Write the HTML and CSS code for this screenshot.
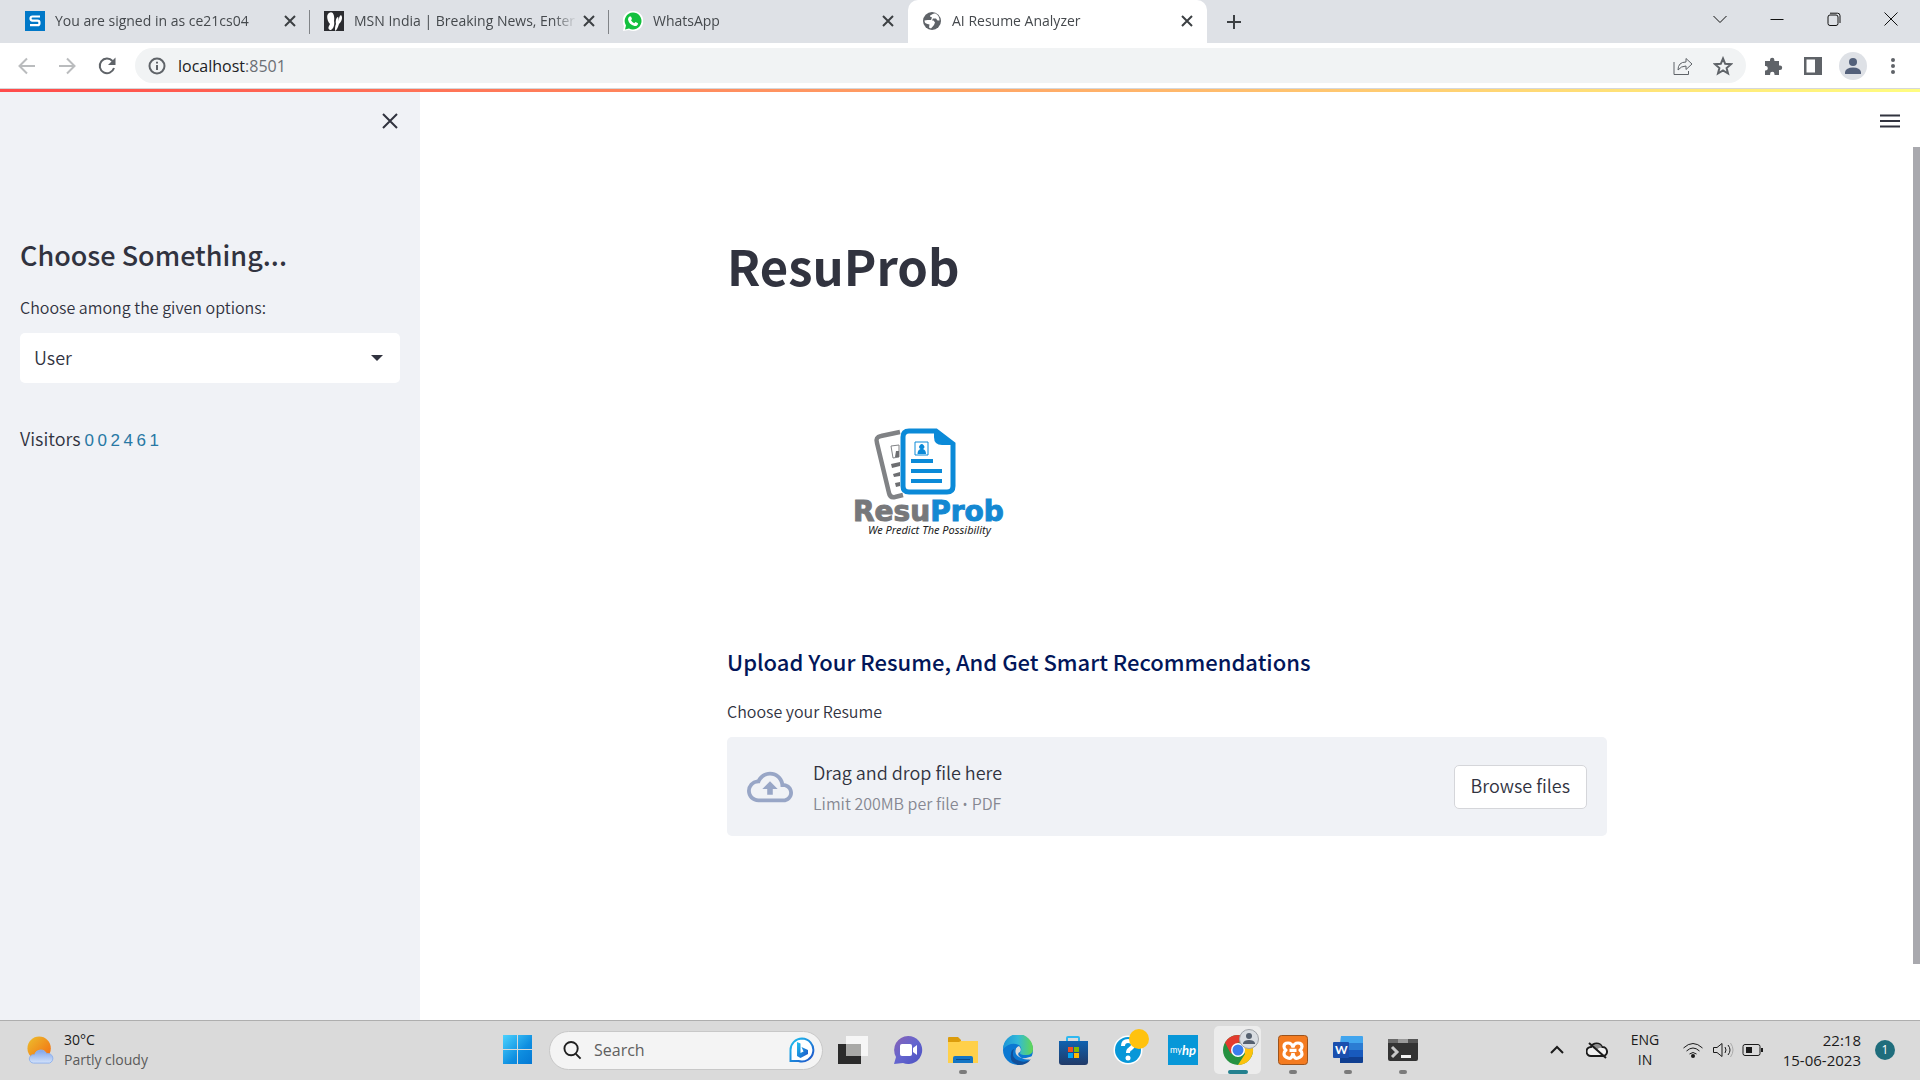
FILE: index.html
```html
<!DOCTYPE html>
<html lang="en">
<head>
<meta charset="utf-8">
<meta name="viewport" content="width=device-width, initial-scale=1">
<title>AI Resume Analyzer</title>
<link rel="stylesheet" href="styles.css">
</head>
<body>
<header class="browser">
  <div class="tabstrip">
    <nav class="tabs" aria-label="Tabs">
      <div class="tab">
        <svg class="favicon" viewBox="0 0 20 20"><path fill="#0078c8" d="M0 0h20v20H0z"/><path d="M15 5.5H7.5Q5.5 5.500 5.500 7.500T7.500 9.700h5q2 0 2 2.200t-2 2.300H5" fill="none" stroke="#fff" stroke-width="2.200"/></svg>
        <a class="tab-title" href="#">You are signed in as ce21cs04</a>
        <button class="tab-close" aria-label="Close tab"><svg viewBox="0 0 12 12"><path d="M1 1l10 10M11 1L1 11"/></svg></button>
      </div>
      <div class="tab">
        <svg class="favicon" viewBox="0 0 20 20"><path fill="#2b2c30" d="M0 0h20v20H0z"/><path fill="#fff" d="M5 2c4-3 6 3 5 8 1 4-1 9-4 9-3-1-1-4 0-6-3-3-4-9-1-11zM17 4c2 2 1 6-2 9-1 3-2 6-4 7 0-3 0-5 1-7-1-4 1-7 2-7 1 1 0 3 0 4 1-2 1-5 3-6z"/></svg>
        <a class="tab-title" href="#">MSN India | Breaking News, Enter</a>
        <button class="tab-close" aria-label="Close tab"><svg viewBox="0 0 12 12"><path d="M1 1l10 10M11 1L1 11"/></svg></button>
      </div>
      <div class="tab">
        <svg class="favicon" viewBox="0 0 20 20"><path fill="#fff" d="M10 0a10 10 0 1 1-4 19L0 20l1-5A10 10 0 0 1 10 0z"/><path fill="#12c03e" d="M10 1.500a8.500 8.500 0 1 1-4 16L2 18.500l1-4a8.500 8.500 0 0 1 7-13z"/><path fill="#fff" d="M6.500 5.500l1.500 0 1 2.500-1 1.300q1.200 2.200 3.200 3l1.300-1.300 2.500 1.200q0 3-3.500 2.800Q6 13.500 5 8.500q0-2 1.500-3z"/></svg>
        <a class="tab-title" href="#">WhatsApp</a>
        <button class="tab-close" aria-label="Close tab"><svg viewBox="0 0 12 12"><path d="M1 1l10 10M11 1L1 11"/></svg></button>
      </div>
      <div class="tab tab-active">
        <svg class="favicon" viewBox="0 0 20 20"><circle cx="10" cy="10" r="9" fill="#5f6368"/><path fill="#fff" d="M12 2.500c-1 1-4 1-4 3l2 1-1 2.500H5.500l-3 .5q0 3 3 3.500l2 .5-.5 3 2 1 3-3.500 1-2.500-1.500-2H10l1-2h3l1.500 2h2q0-5-4-7z"/></svg>
        <a class="tab-title" href="#">AI Resume Analyzer</a>
        <button class="tab-close" aria-label="Close tab"><svg viewBox="0 0 12 12"><path d="M1 1l10 10M11 1L1 11"/></svg></button>
      </div>
      <button class="tab-new" aria-label="New tab"><svg viewBox="0 0 16 16"><path d="M8 1v14M1 8h14"/></svg></button>
    </nav>
    <div class="window-controls">
      <button aria-label="Search tabs"><svg viewBox="0 0 14 14"><path d="M.5 4L7 10.500 13.500 4"/></svg></button>
      <button aria-label="Minimize"><svg viewBox="0 0 14 14"><path d="M.5 7.500h13"/></svg></button>
      <button aria-label="Restore"><svg viewBox="0 0 14 14"><rect x="1" y="3" width="10" height="10.500" rx="2"/><path d="M3 1.200h7.500q2.500 0 2.500 2.500V11"/></svg></button>
      <button aria-label="Close window"><svg viewBox="0 0 14 14"><path d="M.5.5l13 13M13.500.5l-13 13"/></svg></button>
    </div>
  </div>
  <div class="toolbar">
    <button class="tool tool-off" aria-label="Back"><svg viewBox="0 0 20 20"><path d="M18 10H3M10 2.500L2.500 10l7.500 7.500"/></svg></button>
    <button class="tool tool-off" aria-label="Forward"><svg viewBox="0 0 20 20"><path d="M2 10h15M10 2.500l7.500 7.500-7.500 7.500"/></svg></button>
    <button class="tool" aria-label="Reload"><svg viewBox="0 0 20 20"><path d="M15.500 5A7.300 7.300 0 1 0 17 12"/><path class="solid" d="M18.500 1.500V9H11z"/></svg></button>
    <div class="omnibox">
      <svg class="site-info" viewBox="0 0 18 18"><circle cx="9" cy="9" r="7.500"/><path d="M9 8v5M9 4.800v1.800"/></svg>
      <a class="address" href="#">localhost<span class="port">:8501</span></a>
      <button class="tool" aria-label="Share"><svg viewBox="0 0 20 20"><path class="thin" d="M1 6v12.500h14.500V15M5 14q0-8 8-8V2.500L19 8l-6 5.500V10q-5 0-8 4z"/></svg></button>
      <button class="tool" aria-label="Bookmark"><svg viewBox="0 0 20 20"><path class="mid" d="M10 2.500l2.200 5.300 5.800.4-4.400 3.800 1.400 5.500-5-3-5 3 1.400-5.500L2 8.200l5.800-.4z"/></svg></button>
    </div>
    <button class="tool tool-ext" aria-label="Extensions"><svg viewBox="0 0 20 20"><path class="solid" d="M2 5h5V4a2.200 2.200 0 0 1 4.400 0v1H16v4.500h1a2.200 2.200 0 0 1 0 4.400h-1V19h-4.500v-1a2.200 2.200 0 0 0-4.400 0v1H2v-4.500h1a2.300 2.300 0 0 0 0-4.500H2z"/></svg></button>
    <button class="tool" aria-label="Side panel"><svg viewBox="0 0 20 20"><path class="solid" fill-rule="evenodd" d="M1 1h18v18H1zM3.500 3.500v13H12v-13z"/></svg></button>
    <button class="tool profile" aria-label="Profile"><svg viewBox="0 0 20 20"><circle cx="10" cy="6" r="4"/><path d="M2 18v-2q1-4.500 8-4.500t8 4.500v2z"/></svg></button>
    <button class="tool" aria-label="Menu"><svg viewBox="0 0 20 20"><g class="solid"><circle cx="10" cy="4" r="2"/><circle cx="10" cy="10" r="2"/><circle cx="10" cy="16" r="2"/></g></svg></button>
  </div>
</header>
<div class="stripe"></div>
<div class="app">
  <aside class="sidebar">
    <button class="sidebar-close" aria-label="Close sidebar"><svg viewBox="0 0 16 16"><path d="M1 1l14 14M15 1L1 15"/></svg></button>
    <h2 class="sidebar-title">Choose Something...</h2>
    <label class="field-label" for="role">Choose among the given options:</label>
    <div class="select">
      <select id="role"><option>User</option><option>Admin</option></select>
      <svg viewBox="0 0 12 6"><path d="M0 0h12L6 6z"/></svg>
    </div>
    <p class="visitors">Visitors <span class="counter"><span>0</span><span>0</span><span>2</span><span>4</span><span>6</span><span>1</span></span></p>
  </aside>
  <main class="main">
    <button class="app-menu" aria-label="App menu"><svg viewBox="0 0 20 14"><path d="M0 1.500h20M0 7h20M0 12.500h20"/></svg></button>
    <div class="block">
      <h1 class="title">ResuProb</h1>
      <svg class="logo" viewBox="0 0 312 307" role="img" aria-label="ResuProb, We Predict The Possibility">
        <g fill="none" stroke="#808285" stroke-width="4.500"><path d="M173 93l-19 4q-6 1-4 7l12 50q1 5 6 4l8-2"/></g>
        <g fill="#6d6e71"><path d="M164 107l8-1v12l-6 1z" fill="none" stroke="#808285"/><path d="M169 112h3v6h-4zM164 125l9-2v4l-8 2zM166 135l7-2v4l-6 1zM168 144l5-1v4l-4 1z"/></g>
        <path d="M182 92h27l17 13v42q0 6-6 6h-38q-6 0-6-6V98q0-6 6-6z" fill="#fff" stroke="#0b8ad8" stroke-width="5"/>
        <path d="M207 92l19 14h-11q-8 0-8-8z" fill="#0b8ad8"/>
        <path d="M188 103h13v13h-13z" fill="none" stroke="#0b8ad8"/>
        <path d="M190.500 115q0-4 3-5a2.500 2.500 0 1 1 2.500 0q3 1 3 5zM184 120h22v4h-22zM184 130h31v4h-31zM184 140h31v4h-31z" fill="#0b8ad8"/>
        <g class="logo-name"><text x="126" y="182" fill="#77787b" stroke="#77787b">Resu<tspan fill="#1488d2" stroke="#1488d2">Prob</tspan></text></g>
        <text class="logo-tag" x="141" y="195">We Predict The Possibility</text>
      </svg>
      <h5 class="subtitle">Upload Your Resume, And Get Smart Recommendations</h5>
      <p class="field-label" id="upload-label">Choose your Resume</p>
      <section class="dropzone" aria-labelledby="upload-label">
        <svg class="cloud" viewBox="0 0 24 24"><path d="M19.350 10.040A7.490 7.490 0 0 0 12 4C9.110 4 6.600 5.640 5.350 8.040A5.994 5.994 0 0 0 0 14c0 3.310 2.690 6 6 6h13c2.760 0 5-2.240 5-5 0-2.640-2.050-4.780-4.650-4.960zM19 18H6c-2.210 0-4-1.790-4-4s1.790-4 4-4h.710C7.370 7.690 9.480 6 12 6c3.040 0 5.500 2.460 5.500 5.500v.5H19c1.660 0 3 1.340 3 3s-1.340 3-3 3zM8 13h2.550v3h2.900v-3H16l-4-4z"/></svg>
        <div class="drop-text">
          <p class="drop-main">Drag and drop file here</p>
          <p class="drop-note">Limit 200MB per file <span class="dot">•</span> PDF</p>
        </div>
        <button class="browse">Browse files</button>
      </section>
    </div>
    <div class="scrollbar"></div>
  </main>
</div>
<footer class="taskbar">
  <div class="weather">
    <svg class="weather-icon" viewBox="0 0 30 30"><defs><linearGradient id="sun" x1="0" y1="0" x2="1" y2="1"><stop offset="0" stop-color="#ecc02e"/><stop offset="1" stop-color="#f4680f"/></linearGradient><linearGradient id="cl" x1="0" y1="0" x2="0" y2="1"><stop offset="0" stop-color="#7fa4ea"/><stop offset="1" stop-color="#d3e2fa"/></linearGradient></defs><circle cx="13" cy="13" r="12.500" fill="url(#sun)"/><path d="M7 29a4.500 4.500 0 0 1 0-9h1a7 7 0 0 1 13-1 5 5 0 0 1 3 10z" fill="url(#cl)" stroke="#8db0ee"/></svg>
    <p class="weather-text">30°C<br><span>Partly cloudy</span></p>
  </div>
  <div class="pins">
    <button class="pin" aria-label="Start"><svg viewBox="0 0 30 30"><defs><linearGradient id="win" x1="0" y1="0" x2="1" y2="1"><stop offset="0" stop-color="#4cd2fe"/><stop offset=".6" stop-color="#0e8ee0"/><stop offset="1" stop-color="#0478d4"/></linearGradient></defs><path fill="url(#win)" d="M0 0h14v14H0zM15 0h14v14H15zM0 15h14v14H0zM15 15h14v14H15z"/></svg></button>
    <div class="search">
      <svg class="search-glass" viewBox="0 0 20 20"><circle cx="8.500" cy="8" r="7"/><path d="M13.500 13.500l5 5"/></svg>
      <input type="text" placeholder="Search" aria-label="Search">
      <svg class="bing" viewBox="0 0 26 26"><defs><linearGradient id="bing" x1="0" y1="0" x2="1" y2="1"><stop offset="0" stop-color="#1fc4f0"/><stop offset="1" stop-color="#1d4fc8"/></linearGradient></defs><path d="M13 1.500a11.500 11.500 0 1 1-3.500 22.500H1.500V13A11.500 11.500 0 0 1 13 1.500z" fill="#fff" stroke="url(#bing)" stroke-width="2"/><path d="M8 5l3.500 1.500v9.500l3-1.500-2-4.500 6.500 3v4l-7.500 4L8 19z" fill="url(#bing)"/></svg>
    </div>
    <button class="pin" aria-label="Task view"><svg viewBox="0 0 30 30"><path fill="#2b2b2b" d="M0 9h23v20H0z"/><path fill="#f6f6f6" d="M23 1h7v20H8V9 1z"/><path fill="#a9a9a7" d="M8 9h15v12H8z"/></svg></button>
    <button class="pin" aria-label="Chat"><svg viewBox="0 0 30 30"><defs><linearGradient id="chat" x1="0" y1="0" x2="1" y2="1"><stop offset="0" stop-color="#8a62b4"/><stop offset=".5" stop-color="#6465cf"/><stop offset="1" stop-color="#4b50c0"/></linearGradient></defs><path fill="url(#chat)" d="M15 1a14 14 0 1 1-5 27l-9 1 2-7A14 14 0 0 1 15 1z"/><rect x="7" y="9" width="12" height="12" rx="2" fill="#fff"/><path fill="#fff" d="M20 13l4-3v10l-4-3z"/></svg></button>
    <button class="pin running" aria-label="File Explorer"><svg viewBox="0 0 30 30"><path fill="#dc9c0c" d="M0 3q0-1 1-1h9l3 3v3H0z"/><path fill="#ffd04a" d="M0 7h11l2-1h17v22H0z"/><path fill="#1475c4" d="M5 28v-5q0-2 2-2h16q2 0 2 2v5z"/><path stroke="#0a4c8c" d="M8 24.500h14"/></svg></button>
    <button class="pin" aria-label="Edge"><svg viewBox="0 0 30 30"><defs><linearGradient id="edge" x1="0" y1="0" x2="1" y2="0"><stop offset="0" stop-color="#1c94d8"/><stop offset=".5" stop-color="#32b9d8"/><stop offset="1" stop-color="#62d850"/></linearGradient></defs><circle cx="15" cy="15" r="15" fill="#0b78d2"/><path fill="url(#edge)" d="M0 14A15 15 0 0 1 30 14q0 6-7 6-6 0-6-2 3-5-1-8-8-4-16 4z"/><path fill="#124f98" d="M11 14q-4 9 6 12 6 2 11-2Q24 30 16 30 6 28 8 19q0-4 3-5z"/><path fill="#dadada" d="M16 11q-5 2-3 8 3 5 10 4l7-2v2l-2 1q-7 2-12-3-2-3 1-4 2-3-1-6z"/></svg></button>
    <button class="pin" aria-label="Microsoft Store"><svg viewBox="0 0 30 30"><defs><linearGradient id="store" x1="0" y1="0" x2="0" y2="1"><stop offset="0" stop-color="#0f62b0"/><stop offset="1" stop-color="#213a68"/></linearGradient></defs><path d="M9 7V3q0-1 1-1h10q1 0 1 1v4" fill="none" stroke="#2fb8f0" stroke-width="2"/><path fill="url(#store)" d="M1 6h29v21q0 3-3 3H4q-3 0-3-3z"/><path fill="#f25022" d="M10 12h5v5h-5z"/><path fill="#7fba00" d="M16 12h5v5h-5z"/><path fill="#00a4ef" d="M10 18h5v5h-5z"/><path fill="#ffb900" d="M16 18h5v5h-5z"/></svg></button>
    <button class="pin" aria-label="HP Support"><svg class="help" viewBox="0 0 36 36"><circle cx="15" cy="21" r="14.500" fill="#fff"/><circle cx="15" cy="21" r="13" fill="#0797d8"/><path d="M10 17q0-5 5-5t5 4q0 2-3 4-2 1-2 4" fill="none" stroke="#fff" stroke-width="4"/><circle cx="15" cy="29" r="2.500" fill="#fff"/><circle cx="26" cy="10" r="10" fill="#ffc20e"/></svg></button>
    <button class="pin" aria-label="myHP"><svg viewBox="0 0 30 30"><path fill="#0797d8" d="M0 0h30v30H0z"/><text class="my" x="2" y="18">my</text><text class="hp" x="14" y="20">hp</text></svg></button>
    <button class="pin running current" aria-label="Chrome"><svg viewBox="0 0 36 36"><circle cx="15" cy="21" r="15" fill="#259140"/><path fill="#e33b2e" d="M2 13.500A15 15 0 0 1 28 13.500H15L8 25z"/><path fill="#fcc20c" d="M28 13.500A15 15 0 0 1 15 36l7-11-4-11.500z"/><circle cx="15" cy="21" r="7" fill="#fff"/><circle cx="15" cy="21" r="5.500" fill="#3b7ded"/><circle cx="26" cy="10" r="9.500" fill="#d9dde2" stroke="#9fa3a8"/><circle cx="26" cy="7" r="3" fill="#55606f"/><path fill="#55606f" d="M20 15v-1q1-3 6-3t6 3v1z"/></svg></button>
    <button class="pin running" aria-label="XAMPP"><svg viewBox="0 0 30 30"><rect x=".5" y=".5" width="29" height="29" rx="3" fill="#f47b20" stroke="#9c531c"/><path d="M15 12.500Q14 8 10 8T6 11.500Q6 14 8 15.200 6 16.500 6 19T10 23t5-5M15 12.500Q16 8 20 8t4 3.500q0 2.500-2 3.700 2 1.300 2 3.800t-4 4-5-5M11.500 15.300h7" fill="none" stroke="#fff" stroke-width="3.200" stroke-linejoin="round"/></svg></button>
    <button class="pin running" aria-label="Word"><svg viewBox="0 0 30 30"><path fill="#41a5ee" d="M8 1h21q1 0 1 1v6H7z"/><path fill="#2b7cd3" d="M7 8h23v7H7z"/><path fill="#185abd" d="M7 15h23v7H7z"/><path fill="#103f91" d="M7 22h23v5q0 1-1 1H7z"/><rect y="7" width="16" height="16" rx="1" fill="#1a4fae"/><text class="word" x="2" y="19">W</text></svg></button>
    <button class="pin running" aria-label="Terminal"><svg viewBox="0 0 30 30"><path fill="#333" d="M0 4h30v20q0 2-2 2H2q-2 0-2-2z"/><path fill="#6a6a6a" d="M0 4h10v4H0z"/><path fill="#9a9a9a" d="M10 4h10v4H10z"/><path fill="#555" d="M20 4h10v4H20z"/><path d="M4 12l5 5-5 5" fill="none" stroke="#c8c8c8" stroke-width="3"/><path fill="#f2f2f2" d="M13 20h10v3H13z"/></svg></button>
  </div>
  <div class="tray">
    <button class="tray-up" aria-label="Show hidden icons"><svg viewBox="0 0 14 14"><path d="M1 10l6-6 6 6"/></svg></button>
    <svg class="tray-cloud" viewBox="0 0 22 18"><path fill="#f0f0f0" d="M5 15a4 4 0 0 1 0-9 6 6 0 0 1 11 0 4.500 4.500 0 0 1 1 9z"/><path fill="#8d8d8d" stroke="none" d="M6 6q2-3 5-3 4 0 5 4-4-1-5 3-2-4-5-4z"/><path d="M3 2l17 15"/></svg>
    <p class="lang">ENG<br>IN</p>
    <div class="status">
      <svg viewBox="0 0 22 18"><path d="M1.500 7q9.500-9 19 0M4.500 10q6.500-6 13 0M7.500 13q3.500-3 7 0"/><circle cx="11" cy="15" r="2" fill="#1b1b1b" stroke="none"/></svg>
      <svg viewBox="0 0 22 18"><path d="M1.500 6.500v5H5l5 4v-13l-5 4zM13 6q2 3 0 6M16 4q4 5 0 10"/><path d="M18.500 2q5 7 0 14" stroke="#aaa"/></svg>
      <svg viewBox="0 0 22 18"><rect x="1" y="3.500" width="17" height="11" rx="2"/><path fill="#1b1b1b" stroke="none" d="M4 6h6v6H4zM19 7h2v4h-2z"/></svg>
    </div>
    <p class="clock">22:18<br>15-06-2023</p>
    <span class="badge">1</span>
  </div>
</footer>
</body>
</html>
```
FILE: styles.css
```css
* { box-sizing: border-box; }
body {
  margin: 0;
  min-height: 100vh;
  display: flex;
  flex-direction: column;
  background: #fff;
  color: #31333f;
  font-family: "Noto Sans CJK SC", "Noto Sans", sans-serif;
  font-weight: 350;
}
p, h1, h2, h5 { margin: 0; }
button { border: 0; padding: 0; background: none; color: inherit; font: inherit; }
a { color: inherit; text-decoration: none; }
svg { display: block; flex: none; }
.browser, .taskbar { font-family: "Open Sans", "Noto Sans", sans-serif; font-weight: 400; }

/* tab strip */
.tabstrip {
  display: flex;
  justify-content: space-between;
  height: 43px;
  padding-left: 11px;
  background: #dee1e6;
}
.tabs { display: flex; flex: 1; min-width: 0; }
.tab {
  display: flex;
  align-items: center;
  flex: 0 1 299px;
  min-width: 0;
  padding: 0 14px;
  position: relative;
}
.tab:not(.tab-active)::after {
  content: "";
  position: absolute;
  right: 0;
  top: 10px;
  height: 24px;
  width: 1px;
  background: #808387;
}
.tab:has(+ .tab-active)::after { display: none; }
.tab-active { background: #fff; border-radius: 10px 10px 0 0; }
.favicon { width: 20px; height: 20px; margin-bottom: 2px; }
.tab-title {
  flex: 1;
  overflow: hidden;
  margin: 0 6px 2px 10px;
  color: #45494d;
  font-size: 14px;
  line-height: 20px;
  white-space: nowrap;
  mask-image: linear-gradient(90deg, #000 calc(100% - 24px), transparent);
}
.tab-close svg { width: 12px; height: 12px; margin-bottom: 1px; fill: none; stroke: #3c4043; stroke-width: 2; }
.tab-new { padding: 0 19px; }
.tab-new svg { width: 16px; height: 16px; fill: none; stroke: #3c4043; stroke-width: 2; }
.window-controls { display: flex; padding: 0 1px 6px 0; }
.window-controls button { display: grid; place-items: center; width: 57px; }
.window-controls svg { width: 14px; height: 14px; fill: none; stroke: #111; }

/* address bar */
.toolbar {
  display: flex;
  align-items: center;
  height: 46px;
  padding: 0 7px;
  border-bottom: 1px solid #d5d7da;
}
.tool { display: grid; place-items: center; width: 40px; height: 28px; }
.tool svg { width: 20px; height: 20px; fill: none; stroke: #5f6368; stroke-width: 2; }
.tool-off svg { stroke: #babcbe; }
.tool .solid { fill: #5f6368; stroke: none; }
.tool .thin { stroke-width: 1; }
.tool .mid { stroke-width: 2; }
.omnibox {
  display: flex;
  align-items: center;
  flex: 1;
  height: 35px;
  margin: 0 7px 0 8px;
  padding: 0 3px 0 13px;
  border-radius: 18px;
  background: #f1f3f4;
}
.site-info { width: 18px; height: 18px; fill: none; stroke: #5f6368; stroke-width: 2; }
.address { flex: 1; margin-left: 12px; color: #202124; font-size: 16px; line-height: 24px; }
.port { color: #6b6f74; }
.profile { position: relative; }
.profile::before {
  content: "";
  position: absolute;
  inset: 0 6px;
  border-radius: 50%;
  background: #dee1e6;
}
.profile svg { position: relative; width: 20px; fill: #53607a; stroke: none; }
.stripe { height: 3px; background: linear-gradient(90deg, #ff4b4b, #fffd80); }

/* application */
.app { display: flex; flex: 1; }
.sidebar { width: 420px; padding: 20px; background: #f0f2f6; }
.sidebar-close { display: block; margin: 1px 2px 0 auto; }
.sidebar-close svg { width: 16px; height: 16px; fill: none; stroke: #31333f; stroke-width: 2; }
.sidebar-title { margin-top: 108px; font-size: 27px; font-weight: 500; line-height: 36px; }
.field-label { display: block; font-size: 16px; line-height: 24px; }
.sidebar .field-label { margin-top: 22px; }
.select { position: relative; margin-top: 14px; }
.select select {
  appearance: none;
  display: block;
  width: 100%;
  height: 50px;
  padding: 0 14px 2px;
  border: 0;
  border-radius: 5px;
  background: #fff;
  color: #31333f;
  font: 350 18px/24px "Noto Sans CJK SC", sans-serif;
}
.select svg { position: absolute; right: 17px; top: 22px; width: 12px; height: 6px; fill: #31333f; }
.visitors { margin-top: 43px; font-size: 18px; line-height: 24px; }
.counter { display: inline-flex; color: #2878a4; font: 17px/24px "Liberation Sans", sans-serif; }
.counter span { width: 13px; }

.main { display: flex; justify-content: center; flex: 1; position: relative; padding: 0 6px 0 0; }
.app-menu { position: absolute; right: 20px; top: 22px; }
.app-menu svg { width: 20px; height: 14px; stroke: #31333f; stroke-width: 2; }
.block { width: 880px; padding-top: 140px; }
.title { font-size: 49px; font-weight: 700; line-height: 66px; }
.logo { width: 312px; height: 307px; margin-top: 41px; }
.logo-name { font: 700 28px "DejaVu Sans", sans-serif; }
.logo-tag { font: italic 11px "Noto Sans", sans-serif; fill: #222; }
.subtitle { color: #021659; font-size: 22px; font-weight: 500; line-height: 30px; }
.block .field-label { margin-top: 23px; }
.dropzone {
  display: flex;
  align-items: center;
  margin-top: 14px;
  padding: 20px;
  height: 99px;
  border-radius: 5px;
  background: #f0f2f6;
}
.cloud { width: 46px; height: 46px; fill: #98a6c6; }
.drop-text { flex: 1; margin-left: 20px; padding-top: 2px; }
.drop-main { font-size: 18px; line-height: 32px; }
.drop-note { color: #868892; font-size: 16px; line-height: 30px; }
.dot { font-family: "Noto Sans", sans-serif; }
.browse {
  height: 44px;
  padding: 0 16px 3px;
  border: 1px solid #d5d6da;
  border-radius: 5px;
  background: #fff;
  font-size: 18px;
  line-height: 24px;
}
.scrollbar { position: absolute; right: 0; top: 55px; width: 7px; height: 88%; background: #a9a9ae; }

/* taskbar */
.taskbar {
  display: grid;
  grid-template-columns: 1fr auto 1fr;
  align-items: center;
  height: 60px;
  padding-bottom: 1px;
  border-top: 1px solid #aeaeae;
  background: #dadada;
  color: #1b1b1b;
  font-size: 14px;
  line-height: 20px;
}
.weather { display: flex; align-items: center; gap: 9px; padding-left: 27px; }
.weather-icon { width: 28px; height: 30px; }
.weather-text span { color: #5a5a5a; }
.pins { display: flex; align-items: center; }
.pin { position: relative; display: grid; place-items: center; width: 55px; height: 48px; }
.pin svg { position: relative; width: 30px; height: 30px; }
.pin .help, .current svg { width: 36px; height: 36px; margin: 0 0 6px 6px; }
.running::after {
  content: "";
  position: absolute;
  bottom: 0;
  left: 24px;
  width: 8px;
  height: 4px;
  border-radius: 2px;
  background: #7b7b7b;
}
.current::before {
  content: "";
  position: absolute;
  inset: 0 4px;
  border-radius: 5px;
  background: #ececec;
}
.current::after { left: 18px; width: 20px; background: #24818f; }
.my { font: 9px Lato, sans-serif; fill: #fff; }
.hp { font: italic 700 13px Lato, sans-serif; fill: #fff; }
.word { font: 700 12px Lato, sans-serif; fill: #fff; }
.search {
  display: flex;
  align-items: center;
  width: 274px;
  height: 39px;
  margin: 0 2px 0 4px;
  padding: 0 7px 0 13px;
  border: 1px solid #c8c8c8;
  border-radius: 20px;
  background: #f4f4f4;
}
.search-glass { width: 19px; height: 19px; fill: none; stroke: #1f1f1f; stroke-width: 2; }
.search input {
  flex: 1;
  min-width: 0;
  margin-left: 12px;
  padding: 0;
  border: 0;
  background: none;
  font: 16px/24px "Open Sans", sans-serif;
}
.search input::placeholder { color: #5f5f5f; }
.bing { width: 26px; height: 26px; }
.tray { display: flex; align-items: center; justify-content: flex-end; padding-right: 25px; }
.tray svg { fill: none; stroke: #1b1b1b; stroke-width: 2; }
.tray-up svg { width: 14px; height: 14px; }
.tray-cloud { width: 22px; height: 18px; margin-left: 22px; }
.lang { width: 36px; margin: 0 19px; text-align: center; }
.status { display: flex; gap: 8px; }
.status svg { width: 22px; height: 18px; stroke-width: 1; }
.clock { width: 97px; font-size: 15px; text-align: right; }
.badge {
  width: 20px;
  height: 20px;
  margin-left: 14px;
  border-radius: 50%;
  background: #1f6d7c;
  color: #fff;
  font-size: 12px;
  text-align: center;
}
```
